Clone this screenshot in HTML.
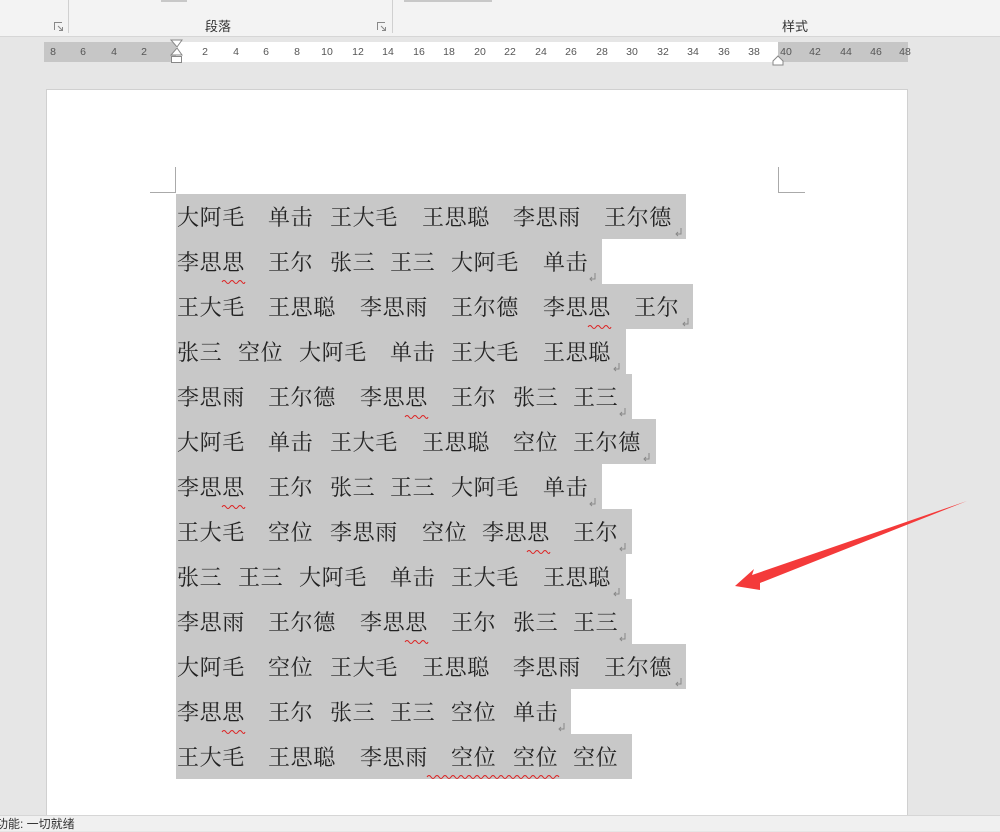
<!DOCTYPE html>
<html><head><meta charset="utf-8"><style>
*{margin:0;padding:0;box-sizing:border-box}
body{width:1000px;height:831px;overflow:hidden;background:#e6e6e6;position:relative;font-family:"Liberation Sans","Noto Sans CJK SC",sans-serif}
.a{position:absolute}
.rib{left:0;top:0;width:1000px;height:37px;background:#f3f3f3;border-bottom:1px solid #d6d6d6}
.w{position:absolute;font-family:"Liberation Serif","Noto Serif CJK SC",serif;font-size:22px;line-height:45px;color:#222;white-space:nowrap;letter-spacing:0.6px}
.row{position:absolute;left:176px;height:45px;background:#c8c8c8}
.n{position:absolute;top:46px;font-size:10.5px;color:#555;transform:translateX(-50%)}
</style></head><body>
<div class="a rib"></div>
<div class="a" style="left:68px;top:0;width:1px;height:33px;background:#d0d0d0"></div>
<div class="a" style="left:392px;top:0;width:1px;height:33px;background:#d0d0d0"></div>
<div class="a" style="left:161px;top:0;width:26px;height:2px;background:#c8c8c8"></div>
<div class="a" style="left:404px;top:0;width:88px;height:2px;background:#c8c8c8"></div>
<div class="a" style="left:205px;top:16px;font-size:13px;color:#333">段落</div>
<div class="a" style="left:782px;top:16px;font-size:13px;color:#333">样式</div>
<svg class="a" style="left:54px;top:22px" width="10" height="10" fill="none" stroke="#888"><path d="M0.5 8V0.5H8M4 4L8.5 8.5M5 8.5H8.5V5"/></svg>
<svg class="a" style="left:377px;top:22px" width="10" height="10" fill="none" stroke="#888"><path d="M0.5 8V0.5H8M4 4L8.5 8.5M5 8.5H8.5V5"/></svg>
<!-- ruler -->
<div class="a" style="left:44px;top:42px;width:864px;height:20px;background:#c6c6c6"></div>
<div class="a" style="left:176px;top:42px;width:602px;height:20px;background:#fff"></div>
<div class="n" style="left:53px">8</div><div class="n" style="left:83px">6</div><div class="n" style="left:114px">4</div><div class="n" style="left:144px">2</div>
<div class="n" style="left:205px">2</div><div class="n" style="left:236px">4</div><div class="n" style="left:266px">6</div><div class="n" style="left:297px">8</div><div class="n" style="left:327px">10</div><div class="n" style="left:358px">12</div><div class="n" style="left:388px">14</div><div class="n" style="left:419px">16</div><div class="n" style="left:449px">18</div><div class="n" style="left:480px">20</div><div class="n" style="left:510px">22</div><div class="n" style="left:541px">24</div><div class="n" style="left:571px">26</div><div class="n" style="left:602px">28</div><div class="n" style="left:632px">30</div><div class="n" style="left:663px">32</div><div class="n" style="left:693px">34</div><div class="n" style="left:724px">36</div><div class="n" style="left:754px">38</div><div class="n" style="left:786px">40</div><div class="n" style="left:815px">42</div><div class="n" style="left:846px">44</div><div class="n" style="left:876px">46</div><div class="n" style="left:905px">48</div>
<svg class="a" style="left:168px;top:39px" width="18" height="32"><path d="M3 1H14L9 8Z" fill="#fff" stroke="#888"/><path d="M9 9L14 16H3Z" fill="#fff" stroke="#888"/><rect x="3.5" y="17.5" width="10" height="6" fill="#fff" stroke="#888"/></svg>
<svg class="a" style="left:771px;top:55px" width="14" height="12"><path d="M7 1L12 6V10H2V6Z" fill="#fff" stroke="#888"/></svg>
<!-- page -->
<div class="a" style="left:46px;top:89px;width:862px;height:730px;background:#fff;border:1px solid #d0d0d0"></div>
<div class="a" style="left:150px;top:192px;width:26px;height:1px;background:#aaa"></div>
<div class="a" style="left:175px;top:167px;width:1px;height:26px;background:#aaa"></div>
<div class="a" style="left:778px;top:192px;width:27px;height:1px;background:#aaa"></div>
<div class="a" style="left:778px;top:167px;width:1px;height:26px;background:#aaa"></div>
<div class="row" style="top:194px;width:510px"></div>
<div class="row" style="top:239px;width:426px"></div>
<div class="row" style="top:284px;width:517px"></div>
<div class="row" style="top:329px;width:450px"></div>
<div class="row" style="top:374px;width:456px"></div>
<div class="row" style="top:419px;width:480px"></div>
<div class="row" style="top:464px;width:426px"></div>
<div class="row" style="top:509px;width:456px"></div>
<div class="row" style="top:554px;width:450px"></div>
<div class="row" style="top:599px;width:456px"></div>
<div class="row" style="top:644px;width:510px"></div>
<div class="row" style="top:689px;width:395px"></div>
<div class="row" style="top:734px;width:456px"></div>
<div style="position:absolute;left:0;top:195px">
<div class="w" style="top:0;left:177px">大阿毛</div><div class="w" style="top:0;left:268px">单击</div><div class="w" style="top:0;left:330px">王大毛</div><div class="w" style="top:0;left:422px">王思聪</div><div class="w" style="top:0;left:513px">李思雨</div><div class="w" style="top:0;left:604px">王尔德</div>
<div class="w" style="top:45px;left:177px">李思思</div><div class="w" style="top:45px;left:268px">王尔</div><div class="w" style="top:45px;left:330px">张三</div><div class="w" style="top:45px;left:390px">王三</div><div class="w" style="top:45px;left:451px">大阿毛</div><div class="w" style="top:45px;left:543px">单击</div>
<div class="w" style="top:90px;left:177px">王大毛</div><div class="w" style="top:90px;left:268px">王思聪</div><div class="w" style="top:90px;left:360px">李思雨</div><div class="w" style="top:90px;left:451px">王尔德</div><div class="w" style="top:90px;left:543px">李思思</div><div class="w" style="top:90px;left:634px">王尔</div>
<div class="w" style="top:135px;left:177px">张三</div><div class="w" style="top:135px;left:238px">空位</div><div class="w" style="top:135px;left:299px">大阿毛</div><div class="w" style="top:135px;left:390px">单击</div><div class="w" style="top:135px;left:451px">王大毛</div><div class="w" style="top:135px;left:543px">王思聪</div>
<div class="w" style="top:180px;left:177px">李思雨</div><div class="w" style="top:180px;left:268px">王尔德</div><div class="w" style="top:180px;left:360px">李思思</div><div class="w" style="top:180px;left:451px">王尔</div><div class="w" style="top:180px;left:513px">张三</div><div class="w" style="top:180px;left:573px">王三</div>
<div class="w" style="top:225px;left:177px">大阿毛</div><div class="w" style="top:225px;left:268px">单击</div><div class="w" style="top:225px;left:330px">王大毛</div><div class="w" style="top:225px;left:422px">王思聪</div><div class="w" style="top:225px;left:513px">空位</div><div class="w" style="top:225px;left:573px">王尔德</div>
<div class="w" style="top:270px;left:177px">李思思</div><div class="w" style="top:270px;left:268px">王尔</div><div class="w" style="top:270px;left:330px">张三</div><div class="w" style="top:270px;left:390px">王三</div><div class="w" style="top:270px;left:451px">大阿毛</div><div class="w" style="top:270px;left:543px">单击</div>
<div class="w" style="top:315px;left:177px">王大毛</div><div class="w" style="top:315px;left:268px">空位</div><div class="w" style="top:315px;left:330px">李思雨</div><div class="w" style="top:315px;left:422px">空位</div><div class="w" style="top:315px;left:482px">李思思</div><div class="w" style="top:315px;left:573px">王尔</div>
<div class="w" style="top:360px;left:177px">张三</div><div class="w" style="top:360px;left:238px">王三</div><div class="w" style="top:360px;left:299px">大阿毛</div><div class="w" style="top:360px;left:390px">单击</div><div class="w" style="top:360px;left:451px">王大毛</div><div class="w" style="top:360px;left:543px">王思聪</div>
<div class="w" style="top:405px;left:177px">李思雨</div><div class="w" style="top:405px;left:268px">王尔德</div><div class="w" style="top:405px;left:360px">李思思</div><div class="w" style="top:405px;left:451px">王尔</div><div class="w" style="top:405px;left:513px">张三</div><div class="w" style="top:405px;left:573px">王三</div>
<div class="w" style="top:450px;left:177px">大阿毛</div><div class="w" style="top:450px;left:268px">空位</div><div class="w" style="top:450px;left:330px">王大毛</div><div class="w" style="top:450px;left:422px">王思聪</div><div class="w" style="top:450px;left:513px">李思雨</div><div class="w" style="top:450px;left:604px">王尔德</div>
<div class="w" style="top:495px;left:177px">李思思</div><div class="w" style="top:495px;left:268px">王尔</div><div class="w" style="top:495px;left:330px">张三</div><div class="w" style="top:495px;left:390px">王三</div><div class="w" style="top:495px;left:451px">空位</div><div class="w" style="top:495px;left:513px">单击</div>
<div class="w" style="top:540px;left:177px">王大毛</div><div class="w" style="top:540px;left:268px">王思聪</div><div class="w" style="top:540px;left:360px">李思雨</div><div class="w" style="top:540px;left:451px">空位</div><div class="w" style="top:540px;left:513px">空位</div><div class="w" style="top:540px;left:573px">空位</div>
</div>
<!-- return marks -->
<svg class="a" style="left:0;top:0" width="1000" height="831" fill="none" stroke="#888" stroke-width="1">
<g id="m"><path d="M681 228v6h-5M678 232l-2 2 2 2"/></g>
<use href="#m" x="-86" y="45"/><use href="#m" x="7" y="90"/><use href="#m" x="-62" y="135"/><use href="#m" x="-56" y="180"/><use href="#m" x="-32" y="225"/><use href="#m" x="-86" y="270"/><use href="#m" x="-56" y="315"/><use href="#m" x="-62" y="360"/><use href="#m" x="-56" y="405"/><use href="#m" x="0" y="450"/><use href="#m" x="-117" y="495"/>
<path d="M222 282q2-3 4 0t4 0t4 0t4 0t4 0t3 0M588 327q2-3 4 0t4 0t4 0t4 0t4 0t3 0M405 417q2-3 4 0t4 0t4 0t4 0t4 0t3 0M222 507q2-3 4 0t4 0t4 0t4 0t4 0t3 0M527 552q2-3 4 0t4 0t4 0t4 0t4 0t3 0M405 642q2-3 4 0t4 0t4 0t4 0t4 0t3 0M222 732q2-3 4 0t4 0t4 0t4 0t4 0t3 0M427 777q2-3 4 0t4 0t4 0t4 0t4 0t4 0t4 0t4 0t4 0t4 0t4 0t4 0t4 0t4 0t4 0t4 0t4 0t4 0t4 0t4 0t4 0t4 0t4 0t4 0t4 0t4 0t4 0t4 0t4 0t4 0t4 0t4 0t4 0" stroke="#d22"/>
<path d="M735 586L754 569L752 575L967 501L760 583L760 590Z" fill="#f43a3a" stroke="none"/>
</svg>
<div class="a" style="left:0;top:815px;width:1000px;height:16px;background:#f0f0f0;border-top:1px solid #d6d6d6"></div>
<div class="a" style="left:-4px;top:816px;font-size:12px;color:#333;line-height:16px">功能: 一切就绪</div>
</body></html>
